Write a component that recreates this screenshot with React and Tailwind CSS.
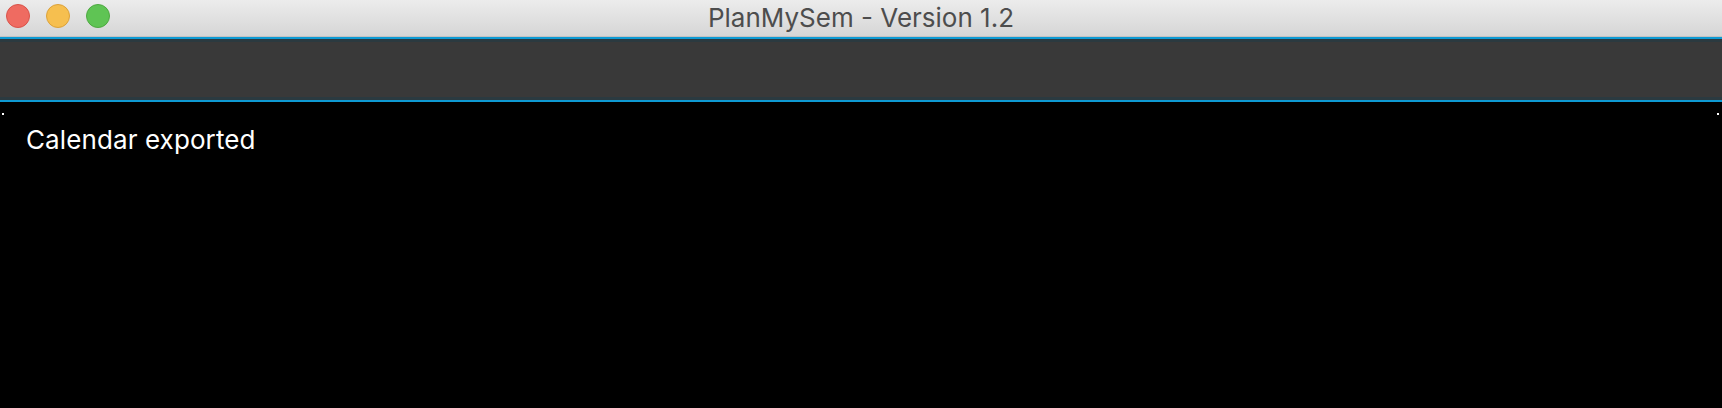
export default function App() {
  return (
    <div className="flex h-[408px] w-[1722px] flex-col bg-black font-['Inter',sans-serif]">
      {/* title bar */}
      <div className="relative flex h-[37px] shrink-0 items-center justify-center border-b border-[#c2c2c2] bg-gradient-to-b from-[#ececec] to-[#d6d6d6]">
        <div className="absolute left-[6px] top-[4px] flex gap-[16px]">
          <span className="h-[24px] w-[24px] rounded-full border border-[#d9534a] bg-[#ef6b61]" />
          <span className="h-[24px] w-[24px] rounded-full border border-[#dca23a] bg-[#f6bf4f]" />
          <span className="h-[24px] w-[24px] rounded-full border border-[#4ea941] bg-[#5fc454]" />
        </div>
        <span className="text-[26px] leading-[30px] text-[#4d4d4d]">PlanMySem - Version 1.2</span>
      </div>

      {/* toolbar */}
      <div className="h-[2px] shrink-0 bg-[#0e9ad3]" />
      <div className="h-[3px] shrink-0 bg-[#2b3a40]" />
      <div className="h-[55px] shrink-0 bg-[#393939]" />
      <div className="h-[3px] shrink-0 bg-[#2b3a40]" />
      <div className="h-[2px] shrink-0 bg-[#0e9ad3]" />

      {/* content */}
      <div className="relative flex-1 bg-black">
        <span className="absolute left-[2px] top-[11px] h-[2px] w-[2px] bg-white" />
        <span className="absolute right-[3px] top-[11px] h-[2px] w-[2px] bg-white" />
        <p className="pl-[26px] pt-[22px] text-[26px] leading-[32px] tracking-[0.1px] text-white">
          Calendar exported
        </p>
      </div>
    </div>
  );
}
